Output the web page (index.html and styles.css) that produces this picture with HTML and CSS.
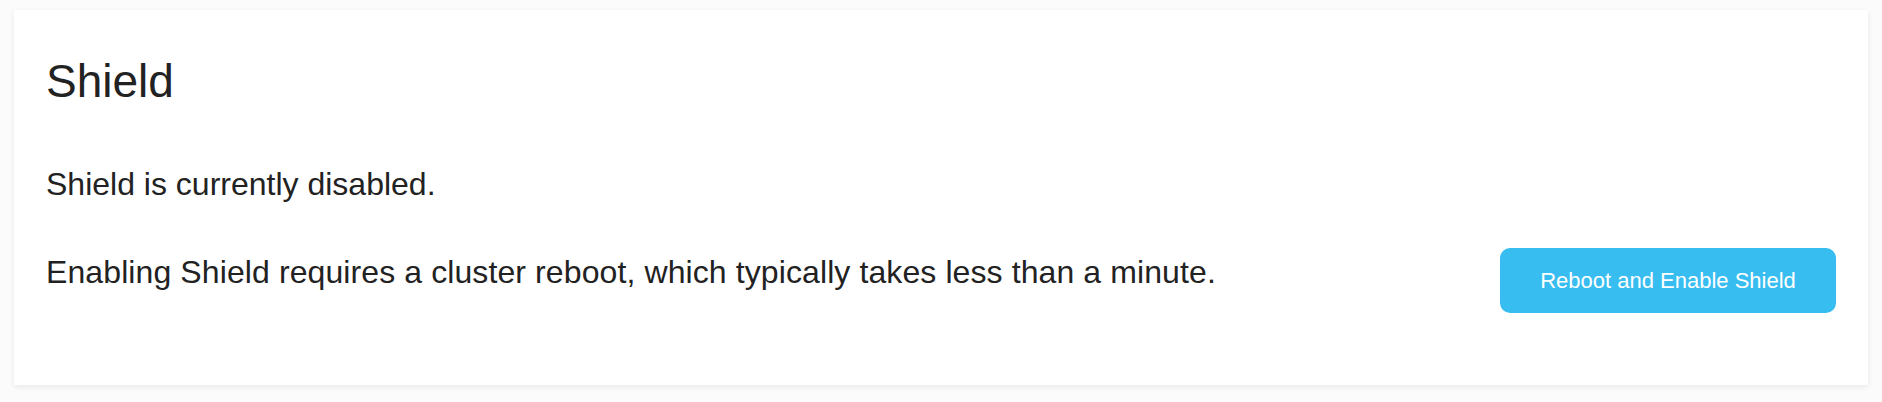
FILE: index.html
```html
<!DOCTYPE html>
<html>
<head>
<meta charset="utf-8">
<link rel="stylesheet" href="styles.css">
</head>
<body>
<div class="page">
  <section class="card">
    <h1 class="title">Shield</h1>
    <p class="status">Shield is currently disabled.</p>
    <div class="row">
      <p class="desc">Enabling Shield requires a cluster reboot, which typically takes less than a minute.</p>
      <button class="btn">Reboot and Enable Shield</button>
    </div>
  </section>
</div>
</body>
</html>
```
FILE: styles.css
```css
html, body {
  margin: 0;
  padding: 0;
  background: #fbfbfb;
  font-family: "Liberation Sans", Arial, Helvetica, sans-serif;
  color: #222;
}
.page {
  padding: 10px 14px 17px 14px;
}
.card {
  background: #fff;
  box-shadow: 0 2px 6px rgba(0, 0, 0, 0.08);
  padding: 43px 32px 72px 32px;
}
.title {
  margin: 0;
  font-size: 46px;
  line-height: 56px;
  font-weight: normal;
  color: #222;
}
.status {
  margin: 53px 0 0 0;
  font-size: 32px;
  line-height: 44px;
}
.row {
  display: flex;
  justify-content: space-between;
  align-items: flex-start;
  margin-top: 42px;
}
.desc {
  margin: 2px 0 0 0;
  font-size: 32px;
  line-height: 44px;
  letter-spacing: 0.1px;
}
.btn {
  flex: none;
  height: 65px;
  width: 336px;
  border: none;
  border-radius: 10px;
  background: #38bdf0;
  color: #fff;
  font-family: "Liberation Sans", Arial, Helvetica, sans-serif;
  font-size: 22px;
  padding: 0;
}
```
